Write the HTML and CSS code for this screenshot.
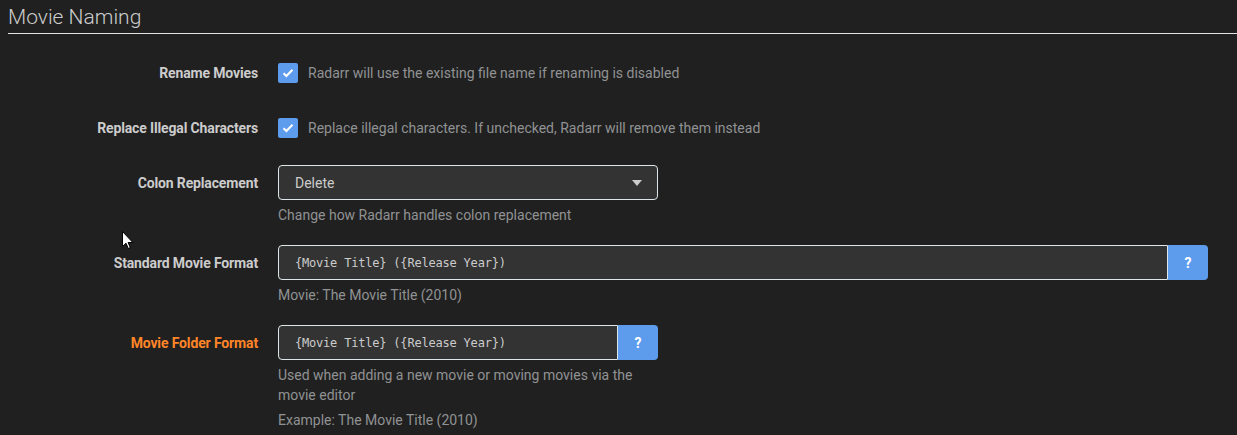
FILE: index.html
```html
<!DOCTYPE html>
<html>
<head>
<meta charset="utf-8">
<link rel="stylesheet" href="styles.css">
</head>
<body>
<div class="page">
  <fieldset class="section">
    <div class="legend">Movie Naming</div>

    <div class="group">
      <label class="label">Rename Movies</label>
      <div class="input-wrap">
        <div class="check-row">
          <span class="checkbox"><svg width="12" height="10" viewBox="0 0 12 10"><path d="M1.5 5.2 L4.4 8 L10.5 1.8" fill="none" stroke="#fff" stroke-width="2"/></svg></span>
          <span class="check-help">Radarr will use the existing file name if renaming is disabled</span>
        </div>
      </div>
    </div>

    <div class="group">
      <label class="label">Replace Illegal Characters</label>
      <div class="input-wrap">
        <div class="check-row">
          <span class="checkbox"><svg width="12" height="10" viewBox="0 0 12 10"><path d="M1.5 5.2 L4.4 8 L10.5 1.8" fill="none" stroke="#fff" stroke-width="2"/></svg></span>
          <span class="check-help">Replace illegal characters. If unchecked, Radarr will remove them instead</span>
        </div>
      </div>
    </div>

    <div class="group">
      <label class="label">Colon Replacement</label>
      <div class="input-wrap small">
        <div class="select">
          <span>Delete</span>
          <svg class="caret" width="10" height="6" viewBox="0 0 10 6"><path d="M0 0 H10 L5 6 Z" fill="#ccc"/></svg>
        </div>
        <div class="help">Change how Radarr handles colon replacement</div>
      </div>
    </div>

    <div class="group">
      <label class="label">Standard Movie Format</label>
      <div class="input-wrap large">
        <div class="text-group">
          <div class="text-input">{Movie Title} ({Release Year})</div>
          <button class="qbtn">?</button>
        </div>
        <div class="help">Movie: The Movie Title (2010)</div>
      </div>
    </div>

    <div class="group">
      <label class="label warn">Movie Folder Format</label>
      <div class="input-wrap small">
        <div class="text-group">
          <div class="text-input">{Movie Title} ({Release Year})</div>
          <button class="qbtn">?</button>
        </div>
        <div class="help">Used when adding a new movie or moving movies via the movie editor</div>
        <div class="help">Example: The Movie Title (2010)</div>
      </div>
    </div>
  </fieldset>

  <svg class="cursor" width="12" height="19" viewBox="0 0 12 19">
    <path d="M0.5 0.5 L0.5 15.5 L4 12.2 L6.3 17.5 L8.3 16.6 L6.1 11.5 L10.8 11.5 Z" fill="#fff" stroke="#000" stroke-width="1"/>
  </svg>
</div>
</body>
</html>
```

FILE: styles.css
```css
html, body {
  margin: 0;
  padding: 0;
  background: #202020;
}

body {
  font-family: Roboto, "Liberation Sans", sans-serif;
  font-size: 14px;
  color: #ccc;
}

.page {
  position: relative;
  padding-left: 8px;
  height: 435px;
  overflow: hidden;
}

.section {
  border: 0;
  margin: 0;
  padding: 0;
  min-width: 0;
}

.legend {
  padding-top: 2px;
  height: 31px;
  line-height: 31px;
  font-size: 21px;
  font-weight: 300;
  color: #ccc;
  border-bottom: 1px solid #e1e2e3;
  margin-bottom: 21px;
}

.group {
  display: flex;
  align-items: flex-start;
  margin-bottom: 20px;
}

.label {
  flex: 0 0 250px;
  margin-right: 20px;
  text-align: right;
  font-weight: 700;
  line-height: 35px;
  padding-top: 1px;
  height: 34px;
  color: #ccc;
  letter-spacing: -0.14px;
}

.label.warn {
  color: #ff8528;
}

.input-wrap {
  flex: 0 0 auto;
}

.input-wrap.small {
  width: 380px;
}

.input-wrap.large {
  width: 930px;
}

.check-row {
  display: flex;
  align-items: center;
  height: 35px;
}

.checkbox {
  width: 20px;
  height: 20px;
  border-radius: 2px;
  background: #5d9cec;
  display: flex;
  align-items: center;
  justify-content: center;
  margin-right: 10px;
}

.check-help {
  color: #909293;
  font-size: 14px;
}

.select {
  box-sizing: border-box;
  height: 35px;
  border: 1px solid #dde6e9;
  border-radius: 4px;
  background: #333;
  color: #ccc;
  display: flex;
  align-items: center;
  justify-content: space-between;
  padding: 0 15px 0 16px;
  font-size: 14px;
}

.caret {
  display: block;
}

.help {
  margin-top: 5px;
  line-height: 20px;
  color: #909293;
  font-size: 14px;
}

.text-group {
  display: flex;
  height: 35px;
}

.text-input {
  flex: 1 1 auto;
  box-sizing: border-box;
  height: 35px;
  border: 1px solid #dde6e9;
  border-radius: 4px 0 0 4px;
  background: #333;
  color: #ccc;
  padding: 0 16px;
  line-height: 34px;
  font-family: "DejaVu Sans Mono", "Liberation Mono", monospace;
  font-size: 12px;
  letter-spacing: -0.2px;
}

.qbtn {
  flex: 0 0 40px;
  height: 35px;
  border: 0;
  border-radius: 0 4px 4px 0;
  background: #5d9cec;
  color: #fff;
  font-family: Roboto, "Liberation Sans", sans-serif;
  font-weight: 700;
  font-size: 14px;
  padding: 0;
}

.cursor {
  position: absolute;
  left: 122px;
  top: 231px;
}
```
